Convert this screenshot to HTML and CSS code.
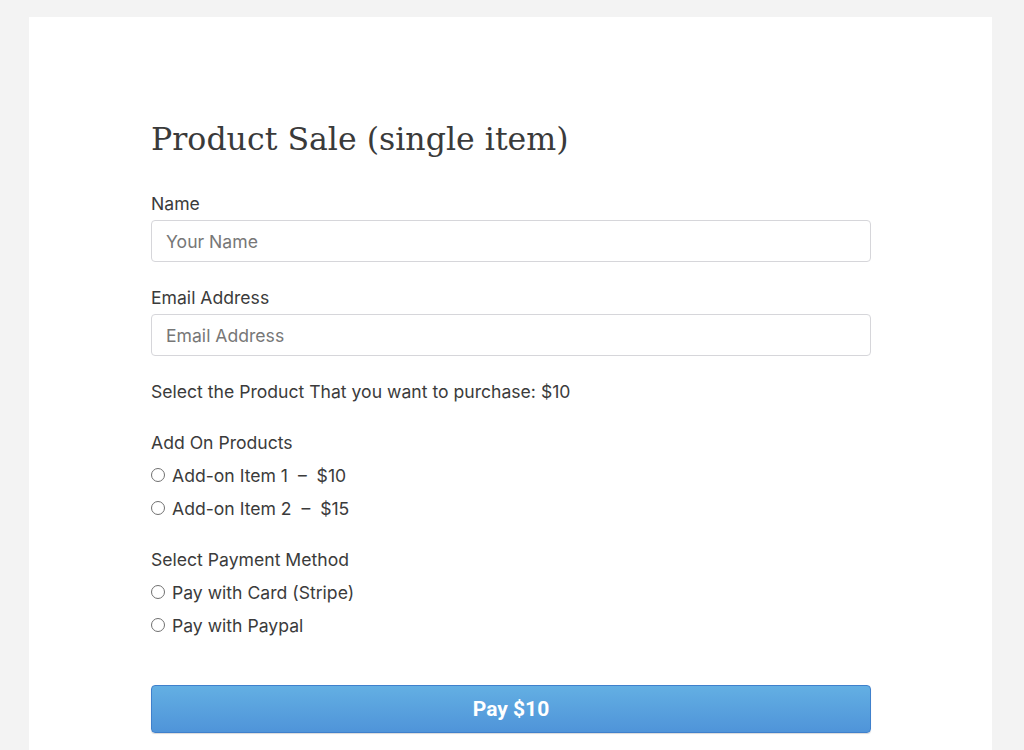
FILE: index.html
```html
<!DOCTYPE html>
<html>
<head>
<meta charset="utf-8">
<link rel="stylesheet" href="styles.css">
</head>
<body>
<div class="page">
  <div class="card">
    <form class="form">
      <h1 class="title">Product Sale (single item)</h1>
      <div class="field">
        <label class="label">Name</label>
        <input class="input" type="text" placeholder="Your Name">
      </div>
      <div class="field">
        <label class="label">Email Address</label>
        <input class="input" type="text" placeholder="Email Address">
      </div>
      <p class="text">Select the Product That you want to purchase: $10</p>
      <div class="group">
        <div class="label">Add On Products</div>
        <label class="radio"><span class="dot"></span>Add-on Item 1 &nbsp;–&nbsp; $10</label>
        <label class="radio"><span class="dot"></span>Add-on Item 2 &nbsp;–&nbsp; $15</label>
      </div>
      <div class="group">
        <div class="label">Select Payment Method</div>
        <label class="radio"><span class="dot"></span>Pay with Card (Stripe)</label>
        <label class="radio"><span class="dot"></span>Pay with Paypal</label>
      </div>
      <button class="pay" type="button">Pay $10</button>
    </form>
  </div>
</div>
</body>
</html>
```
FILE: styles.css
```css
html, body {
  margin: 0;
  padding: 0;
  background: #f3f3f3;
}
.page {
  padding: 17px 32px 0 29px;
  height: 733px;
  overflow: hidden;
}
.card {
  background: #fff;
  height: 800px;
  padding: 100px 0 0 122px;
  box-sizing: border-box;
}
.form {
  width: 720px;
  font-family: "Inter", "Liberation Sans", Arial, sans-serif;
  font-size: 17.6px;
  color: #3b3b3b;
}
.title {
  font-family: "DejaVu Serif", "Liberation Serif", serif;
  font-weight: normal;
  font-size: 31.6px;
  color: #3a3a3a;
  margin: 0 0 33px 0;
  line-height: 44px;
}
.field {
  margin-bottom: 26px;
}
.label {
  display: block;
  line-height: 20px;
  margin-bottom: 6px;
}
.input {
  display: block;
  width: 100%;
  box-sizing: border-box;
  height: 42px;
  border: 1px solid #d6d6da;
  border-radius: 4px;
  padding: 0 14px;
  font-family: "Inter", "Liberation Sans", Arial, sans-serif;
  font-size: 17.6px;
  color: #333;
  outline: none;
}
.input::placeholder {
  color: #777;
}
.text {
  margin: 2px 0 31px 0;
  line-height: 20px;
}
.group {
  margin-bottom: 25px;
}
.group .label {
  margin-bottom: 6px;
}
.radio {
  display: flex;
  align-items: center;
  height: 33px;
  white-space: pre;
}
.dot {
  width: 14px;
  height: 14px;
  border: 1px solid #707070;
  border-radius: 50%;
  margin-right: 7px;
  box-sizing: border-box;
  position: relative;
  top: -1px;
}
.pay {
  display: block;
  width: 720px;
  height: 48px;
  margin-top: 43px;
  border: 1px solid #3f80cc;
  border-radius: 4px;
  background: linear-gradient(#63afe3, #4f94d9);
  color: #fff;
  font-family: "Roboto", "Liberation Sans", sans-serif;
  font-weight: bold;
  font-size: 21px;
  box-shadow: 0 1px 1px rgba(0,0,0,0.15);
}
```
